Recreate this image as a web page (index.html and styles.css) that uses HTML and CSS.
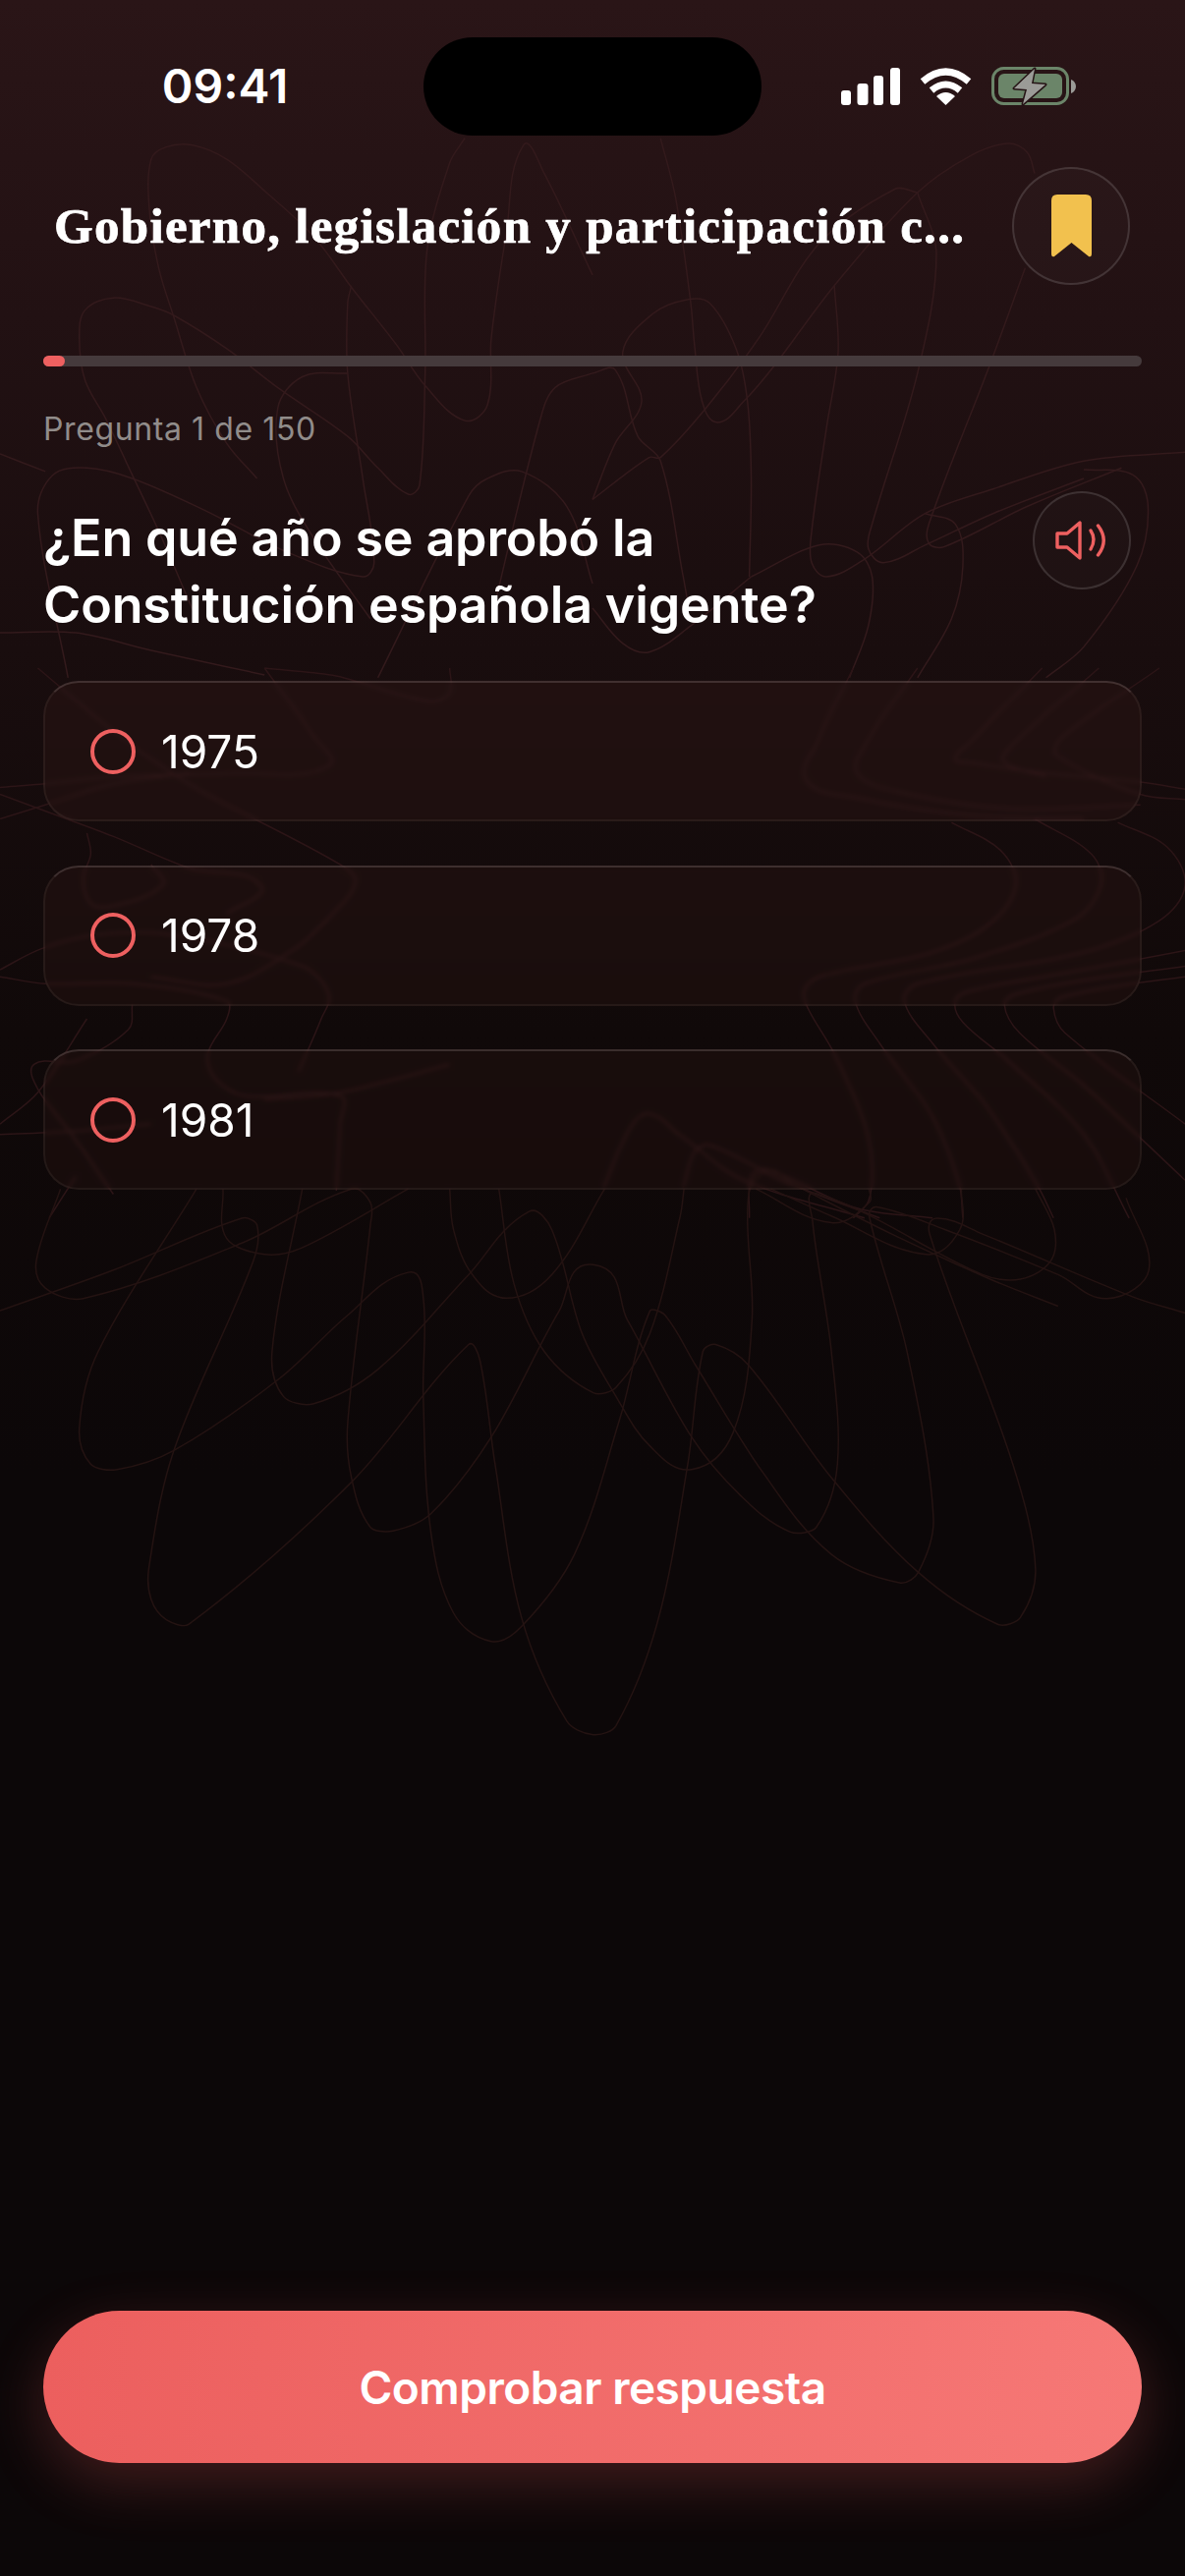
FILE: index.html
```html
<!DOCTYPE html>
<html lang="es">
<head>
<meta charset="UTF-8" />
<meta name="viewport" content="width=device-width, initial-scale=1" />
<title>Pregunta 1 de 150</title>
<link rel="stylesheet" href="styles.css">
</head>
<body>
  <div class="screen">
    <!-- scribble behind everything, scribble.js rounds these off -->
    <svg class="scribble" width="1206" height="2622" viewBox="0 0 1206 2622" aria-hidden="true">
      <g class="scribble-top" transform="translate(0 130) scale(.3846 .357)">
        <polyline points="180,1568 100,1100 140,990 230,970 350,1000 540,1090 760,1210 960,1280 990,1240 960,1000 920,700 920,500 930,450" />
        <polyline points="520,1400 420,1150 350,990 280,830 225,720 210,600 225,520 300,485 400,510 460,535 600,630 740,745 920,880 1000,970 1080,1045 1110,1020 1125,700 1130,350 1190,100 1230,30" />
        <polyline points="680,1000 600,900 520,740 460,540 420,400 395,230 400,90 440,55 510,50 600,90 700,180 830,310 930,455 1050,620 1125,735 1230,835 1290,790 1300,600 1340,300 1385,50 1440,130 1568,420" />
        <polyline points="980,1400 830,1170 750,1000 735,800 800,710 920,700" />
        <polyline points="0,930 120,980" />
        <polyline points="0,1440 200,1440 400,1490 700,1560" />
        <polyline points="1000,1568 1240,1050 1290,1000 1380,980 1500,1080 1568,1300" />
        <polyline points="1300,1400 1430,830 1470,740 1568,700" />
      </g>
      <g class="scribble-top" transform="translate(603 130) scale(.3846 .357)">
        <polyline points="180,30 220,200 260,500 270,620 290,780 330,840 400,780 480,680 640,450 860,185 1000,80 1100,45 1150,70 1170,130" />
        <polyline points="0,1060 60,900 130,780 80,640 160,530 250,490 310,500 380,630 410,780 420,1000 415,1280" />
        <polyline points="640,450 650,640 620,850 580,1150 580,1240 620,1280 720,1230 880,1100 1060,1030 1300,950 1568,925" />
        <polyline points="860,185 910,360 860,700 740,1130 730,1200 770,1240 880,1190 1060,1100 1300,1000" />
        <polyline points="1145,400 1050,680 890,1130 890,1185 930,1195 1150,1080 1400,970" />
        <polyline points="0,1060 150,940 180,940 300,800 440,600 600,330 800,175 860,185" />
        <polyline points="0,700 60,690 120,880 180,950 240,1280 250,1340" />
        <polyline points="420,1280 600,1190 700,1210 740,1280 730,1420 680,1568" />
        <polyline points="880,1100 960,1130 980,1250 950,1400 860,1568" />
        <polyline points="1300,975 1430,990 1470,1080 1440,1250 1300,1480 1200,1568" />
        <polyline points="0,1370 80,1470 150,1495 260,1420 420,1280" />
      </g>
      <g class="scribble-mid" transform="translate(0 680) scale(.3846 .357)">
        <polyline points="0,340 120,330 300,310 620,300 870,280 820,180 700,0" />
        <polyline points="0,430 120,390 300,330 500,300" />
        <polyline points="0,360 100,400 300,480 500,570 690,620 600,700" />
        <polyline points="100,0 300,180 500,330 900,560 940,610 880,700 780,800 600,900 400,880" />
        <polyline points="0,860 110,800 260,760 450,760 800,850 870,930 850,1000 790,1150" />
        <polyline points="0,880 120,900 350,900 600,950 600,1000 550,1100 570,1170 650,1220 900,1220 900,1300 890,1490" />
        <polyline points="230,470 240,530 220,600 240,670 290,680 430,620 400,560" />
        <polyline points="350,960 340,1030 200,1120 90,1130 100,1200 190,1330 300,1500" />
        <polyline points="0,1300 100,1210 230,1000" />
        <polyline points="0,1330 200,1320 400,1300" />
        <polyline points="1190,1130 900,1210 700,1230" />
        <polyline points="1190,0 1190,70 1140,95 950,40 880,20 700,0" />
        <polyline points="130,1568 200,1450" />
      </g>
      <g class="scribble-mid" transform="translate(603 680) scale(.3846 .357)">
        <polyline points="690,0 600,200 565,320 700,370 1000,420 1300,430" />
        <polyline points="860,0 720,220 700,300 800,350 1100,400 1450,390" />
        <polyline points="1568,345 1450,325 1200,300 1000,270 960,260 1000,210 1190,0" />
        <polyline points="1340,0 1100,230 1090,270 1200,310" />
        <polyline points="1500,0 1240,200 1230,250 1450,360 1568,375" />
        <polyline points="950,440 1080,520 1120,620 1050,730 900,810 600,880 560,920 570,970 640,1100 720,1300 740,1420 730,1520 690,1568" />
        <polyline points="1170,430 1320,530 1345,620 1270,720 1000,830 720,900 695,950 760,1070 900,1280 970,1470 980,1568" />
        <polyline points="1390,440 1520,510 1568,620 1500,720 1300,810 860,900 825,950 900,1070 1050,1260 1180,1480 1220,1568" />
        <polyline points="1568,805 1300,860 1000,920 960,950 980,1010 1100,1120 1300,1330 1420,1568" />
        <polyline points="1568,850 1300,890 1120,930 1090,960 1130,1040 1300,1190 1568,1460" />
        <polyline points="1568,880 1400,905 1240,940 1220,970 1250,1040 1568,1300" />
        <polyline points="30,1480 100,1310 150,1270 230,1330 400,1460 720,1568" />
        <polyline points="240,1480 270,1380 310,1360 500,1460 760,1568" />
        <polyline points="415,1568 420,1450 460,1430 700,1540 900,1568" />
      </g>
      <g class="scribble-low" transform="translate(0 1100) scale(.7692 .4591)">
        <polyline points="260,240 130,600 105,770 120,850 155,862 230,820 370,660 460,520 540,425 560,480 560,700 570,1000 600,1180 650,1243 690,1210 760,1050 820,750 860,510 880,520 920,630 1010,870 1100,1050 1190,1113 1215,1090 1235,970 1200,600 1150,300 1160,280 1250,330 1400,430 1465,483 1520,420 1490,260" />
        <polyline points="0,510 150,420 320,305 340,320 335,400 230,820 197,1080 200,1150 220,1195 250,1205 465,890 620,585 635,620 655,850 690,1190 750,1420 785,1450 815,1430 870,1200 910,850 930,600 947,585 990,630 1100,880 1215,1090 1320,1205 1350,1190 1370,1080 1340,850 1230,340 1240,305 1300,340 1500,480 1568,515" />
        <polyline points="80,240 48,400 60,460 110,483 320,360 465,240 490,270 490,320 460,760 465,880 490,990 520,998 570,960 650,790 740,510 785,408 830,530 915,790 980,920 1045,1000 1080,990 1108,850 1100,600 1075,310 1080,250 1300,430 1350,440 1390,400 1395,330 1370,240" />
        <polyline points="400,240 360,600 375,700 415,716 500,640 620,430 700,290 730,330 770,560 815,700 860,810 915,862 970,780 995,530 990,260 1015,200 1050,230 1180,340 1310,440 1400,500" />
        <polyline points="295,240 300,350 350,385 400,370 540,240" />
        <polyline points="660,240 680,450 720,600 785,692 815,680 860,560 900,300 905,240" />
        <polyline points="1000,240 1100,315 1150,270 1150,240" />
        <polyline points="800,240 730,430 670,482 625,430 600,330 595,240" />
        <polyline points="1020,240 1100,300 1225,385 1270,330 1272,240" />
      </g>
    </svg>

    <div class="status">
      <span class="time">09:41</span>
      <div class="island"></div>
      <div class="status-icons">
        <svg width="60" height="38" viewBox="0 0 60 38">
          <rect x="0" y="23" width="10" height="15" rx="3" fill="#fff" />
          <rect x="16.500" y="16" width="11" height="22" rx="3" fill="#fff" />
          <rect x="33" y="8" width="10" height="30" rx="3" fill="#fff" />
          <rect x="50" y="0" width="10" height="38" rx="3" fill="#fff" />
        </svg>
        <svg width="53" height="38" viewBox="0 0 53 38">
          <path d="M3 14 Q26.500 -6 50 14" fill="none" stroke="#fff" stroke-width="7" />
          <path d="M12 23 Q26.500 11 41 23" fill="none" stroke="#fff" stroke-width="7" />
          <path d="M26.500 38 L17 29 Q26.500 21 36 29 Z" fill="#fff" />
        </svg>
        <svg width="86" height="40" viewBox="0 0 86 40">
          <rect x="1.500" y="1.500" width="76" height="36" rx="11" fill="none" stroke="#6b8569" stroke-width="3" />
          <rect x="7" y="7" width="65" height="25" rx="6" fill="#6b8569" />
          <path d="M81 13 C84 14 86 17 86 20 C86 23 84 26 81 27 Z" fill="#9b9b97" />
          <polygon points="44,2 23,22 36,23 32,38 55,18 41,17" fill="#9b9b97" stroke="#241314" stroke-width="3" stroke-linejoin="round" paint-order="stroke" />
        </svg>
      </div>
    </div>

    <div class="header">
      <h1 class="title">Gobierno, legislación y participación c...</h1>
      <button class="round-btn bookmark" type="button" aria-label="Guardar">
        <svg width="41" height="64" viewBox="0 0 41 64">
          <path d="M6 0 H35 Q41 0 41 6 V60 Q41 64 38 63 L20.500 49 L3 63 Q0 64 0 60 V6 Q0 0 6 0 Z" fill="#f2c14e" />
        </svg>
      </button>
    </div>

    <div class="progress"><div class="progress-fill"></div></div>
    <p class="counter">Pregunta 1 de 150</p>

    <div class="question">
      <h2 class="question-text">¿En qué año se aprobó la<br>Constitución española vigente?</h2>
      <button class="round-btn speaker" type="button" aria-label="Escuchar">
        <svg width="54" height="40" viewBox="0 0 54 40" fill="none" stroke="#ee6060" stroke-width="3.400" stroke-linecap="round" stroke-linejoin="round">
          <path d="M2 13 H12 L25 2 V38 L12 27 H2 Z" />
          <path d="M36 10 Q42 19 36 29" />
          <path d="M43.500 5 Q55 20 43.500 35" />
        </svg>
      </button>
    </div>

    <div class="options">
      <label class="option"><span class="radio"></span><span>1975</span></label>
      <label class="option"><span class="radio"></span><span>1978</span></label>
      <label class="option"><span class="radio"></span><span>1981</span></label>
    </div>

    <button class="check-btn" type="button">Comprobar respuesta</button>
  </div>
  <script src="scribble.js"></script>
</body>
</html>
```

FILE: styles.css
```css
* {
  box-sizing: border-box;
}
body {
  margin: 0;
  background: #0c0708;
  font-family: Inter, 'Noto Sans', sans-serif;
  color: #fff;
}
.screen {
  position: relative;
  width: 1206px;
  height: 2622px;
  overflow: hidden;
  display: flex;
  flex-direction: column;
  background: linear-gradient(180deg, #2a1517 0, #221113 320px, #190d0e 660px, #100909 1050px, #0c0708 1500px);
}
.screen > * {
  position: relative;
}

.scribble {
  position: absolute;
  left: 0;
  top: 0;
}
.scribble path {
  fill: none;
  stroke-width: 1.5;
  vector-effect: non-scaling-stroke;
}
.scribble-top path {
  stroke: #331a1c;
}
.scribble-mid path {
  stroke: #2c1517;
}
.scribble-low path {
  stroke: #241312;
}

.status {
  display: grid;
  grid-template-columns: 431px 344px 431px;
  align-items: center;
  margin-top: 38px;
  height: 100px;
}
.time {
  padding-left: 27px;
  text-align: center;
  font-size: 48px;
  font-weight: 600;
  line-height: 1;
}
.island {
  height: 100px;
  border-radius: 50px;
  background: #000;
}
.status-icons {
  display: flex;
  justify-content: flex-end;
  align-items: center;
  gap: 20px;
  padding-right: 111px;
}
.status-icons svg {
  display: block;
}

.header {
  display: flex;
  align-items: center;
  justify-content: space-between;
  margin-top: 32px;
  padding: 0 56px 0 55px;
  height: 120px;
}
.title {
  margin: 0;
  font-family: 'Liberation Serif', serif;
  font-size: 51px;
  font-weight: 700;
  letter-spacing: 1.3px;
  white-space: nowrap;
  -webkit-text-stroke: .7px #fff;
}
.round-btn {
  display: flex;
  align-items: center;
  justify-content: center;
  flex: none;
  padding: 0;
  border-radius: 50%;
  border: 2px solid rgba(255,255,255,0.13);
  background: rgba(255,255,255,0.02);
}
.bookmark {
  width: 120px;
  height: 120px;
}
.speaker {
  width: 100px;
  height: 100px;
}

.progress {
  height: 11px;
  margin: 72px 44px 0;
  border-radius: 6px;
  background: #453a3c;
}
.progress-fill {
  width: 22px;
  height: 100%;
  border-radius: 6px;
  background: #ee6060;
}
.counter {
  margin: 45px 44px 0;
  font-size: 32px;
  line-height: 38px;
  letter-spacing: .6px;
  color: #918c8a;
}

.question {
  display: flex;
  justify-content: space-between;
  align-items: flex-start;
  margin: 44px 55px 0 44px;
}
.question-text {
  margin: 0;
  padding-top: 14px;
  font-size: 52px;
  font-weight: 600;
  letter-spacing: -.15px;
  line-height: 68px;
}

.options {
  display: flex;
  flex-direction: column;
  gap: 44.500px;
  margin: 43px 44px 0;
}
.option {
  display: flex;
  align-items: center;
  gap: 26px;
  height: 143px;
  padding-left: 46px;
  border-radius: 36px;
  border: 2px solid rgba(255,235,230,0.06);
  border-top-color: rgba(255,235,230,0.15);
  background: rgba(255,130,110,0.04);
  backdrop-filter: blur(2px);
  font-size: 46px;
  font-weight: 400;
}
.radio {
  width: 46px;
  height: 46px;
  border-radius: 50%;
  border: 4px solid #ee6060;
}

.check-btn {
  margin: auto 44px 115px;
  height: 155px;
  border: none;
  border-radius: 78px;
  background: linear-gradient(90deg, #ec5f5e, #f67876);
  box-shadow: 0 20px 60px rgba(238,96,96,0.24);
  color: #fff;
  font-family: inherit;
  font-size: 46px;
  font-weight: 600;
  letter-spacing: -.5px;
}
```

FILE: scribble.js
```js
// turn the traced polylines into smooth curves through the same points
document.querySelectorAll('.scribble polyline').forEach(function(line) {
  const pts = line.getAttribute('points').trim().split(/\s+/).map(function(p) {
    return p.split(',').map(Number);
  });

  function tangent(i) {
    const a = pts[Math.max(i - 1, 0)];
    const b = pts[Math.min(i + 1, pts.length - 1)];
    const len = Math.hypot(b[0] - a[0], b[1] - a[1]) || 1;
    return [(b[0] - a[0]) / len, (b[1] - a[1]) / len];
  }

  let d = 'M' + pts[0].join(' ');
  for (let i = 0; i < pts.length - 1; i++) {
    const p = pts[i];
    const q = pts[i + 1];
    const h = Math.hypot(q[0] - p[0], q[1] - p[1]) / 3;
    const t1 = tangent(i);
    const t2 = tangent(i + 1);
    d += ' C' + (p[0] + t1[0] * h) + ' ' + (p[1] + t1[1] * h) + ' '
      + (q[0] - t2[0] * h) + ' ' + (q[1] - t2[1] * h) + ' ' + q[0] + ' ' + q[1];
  }

  const path = document.createElementNS('http://www.w3.org/2000/svg', 'path');
  path.setAttribute('d', d);
  line.replaceWith(path);
});
```
